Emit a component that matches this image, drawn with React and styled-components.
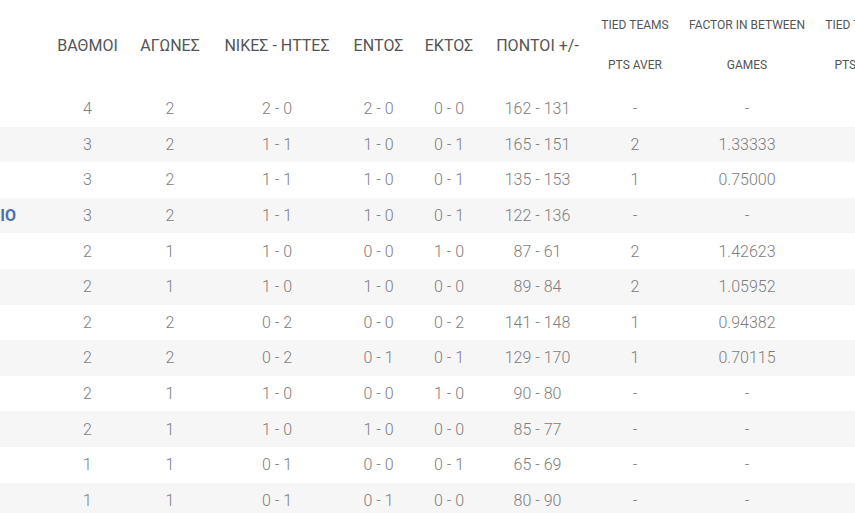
import React from 'react';
import styled, { createGlobalStyle } from 'styled-components';

const Global = createGlobalStyle`
  html, body { margin: 0; padding: 0; background: #fff; }
  body { font-family: Roboto, "Noto Sans", sans-serif; }
`;

const Viewport = styled.div`
  width: 855px;
  height: 513px;
  overflow: hidden;
  background: #fff;
`;

const Table = styled.table`
  border-collapse: collapse;
  table-layout: fixed;
  width: 1023px;
  margin-left: -120px;
`;

const Col = styled.col`
  width: ${(p) => p.$w}px;
`;

const HeadCell = styled.th`
  height: 89px;
  padding: ${(p) => (p.$small ? '0 0 2px' : '1px 0 0')};
  vertical-align: middle;
  text-align: center;
  white-space: nowrap;
  font-weight: 400;
  color: #555555;
  font-size: ${(p) => (p.$small ? '12px' : '16px')};
  line-height: ${(p) => (p.$small ? '40px' : '20px')};
`;

const Row = styled.tr`
  height: 35.6px;
  &:nth-child(even) {
    background: #f7f6f6;
  }
`;

const Cell = styled.td`
  padding: 0;
  text-align: center;
  vertical-align: middle;
  white-space: nowrap;
  font-size: 16px;
  font-weight: 300;
  color: #7d7d7d;
`;

const TeamCell = styled.td`
  padding: 0 0 0 ${(p) => p.$pad}px;
  text-align: left;
  vertical-align: middle;
  white-space: nowrap;
  font-size: 16px;
  font-weight: 700;
  color: #4a72b0;
`;

const widths = [166, 83, 82, 132, 71, 70, 107, 88, 136, 88];

const rows = [
  ['ΑΕΚ', '4', '2', '2 - 0', '2 - 0', '0 - 0', '162 - 131', '-', '-', '-'],
  ['ΑΡΗ', '3', '2', '1 - 1', '1 - 0', '0 - 1', '165 - 151', '2', '1.33333', '2'],
  ['ΠΑΟ', '3', '2', '1 - 1', '1 - 0', '0 - 1', '135 - 153', '1', '0.75000', '1'],
  ['ΛΑΥΡΙΟ', '3', '2', '1 - 1', '1 - 0', '0 - 1', '122 - 136', '-', '-', '-'],
  ['ΗΡΑ', '2', '1', '1 - 0', '0 - 0', '1 - 0', '87 - 61', '2', '1.42623', '2'],
  ['ΚΑΡ', '2', '1', '1 - 0', '1 - 0', '0 - 0', '89 - 84', '2', '1.05952', '2'],
  ['ΠΕΡ', '2', '2', '0 - 2', '0 - 0', '0 - 2', '141 - 148', '1', '0.94382', '1'],
  ['ΟΣΦ', '2', '2', '0 - 2', '0 - 1', '0 - 1', '129 - 170', '1', '0.70115', '1'],
  ['ΚΟΛ', '2', '1', '1 - 0', '0 - 0', '1 - 0', '90 - 80', '-', '-', '-'],
  ['ΑΠΟ', '2', '1', '1 - 0', '1 - 0', '0 - 0', '85 - 77', '-', '-', '-'],
  ['ΙΩΝ', '1', '1', '0 - 1', '0 - 0', '0 - 1', '65 - 69', '-', '-', '-'],
  ['ΜΑΡ', '1', '1', '0 - 1', '0 - 1', '0 - 0', '80 - 90', '-', '-', '-'],
];

export default function App() {
  return (
    <>
      <Global />
      <Viewport>
        <Table>
          <colgroup>
            {widths.map((w, i) => (
              <Col key={i} $w={w} />
            ))}
          </colgroup>
          <thead>
            <tr>
              <HeadCell />
              <HeadCell>ΒΑΘΜΟΙ</HeadCell>
              <HeadCell>ΑΓΩΝΕΣ</HeadCell>
              <HeadCell>ΝΙΚΕΣ - ΗΤΤΕΣ</HeadCell>
              <HeadCell>ΕΝΤΟΣ</HeadCell>
              <HeadCell>ΕΚΤΟΣ</HeadCell>
              <HeadCell>ΠΟΝΤΟΙ +/-</HeadCell>
              <HeadCell $small>
                TIED TEAMS
                <br />
                PTS AVER
              </HeadCell>
              <HeadCell $small>
                FACTOR IN BETWEEN
                <br />
                GAMES
              </HeadCell>
              <HeadCell $small>
                TIED TEAMS
                <br />
                PTS DIFF
              </HeadCell>
            </tr>
          </thead>
          <tbody>
            {rows.map((r, i) => (
              <Row key={i}>
                <TeamCell $pad={i === 3 ? 80 : 78}>{r[0]}</TeamCell>
                {r.slice(1).map((v, j) => (
                  <Cell key={j}>{v}</Cell>
                ))}
              </Row>
            ))}
          </tbody>
        </Table>
      </Viewport>
    </>
  );
}
